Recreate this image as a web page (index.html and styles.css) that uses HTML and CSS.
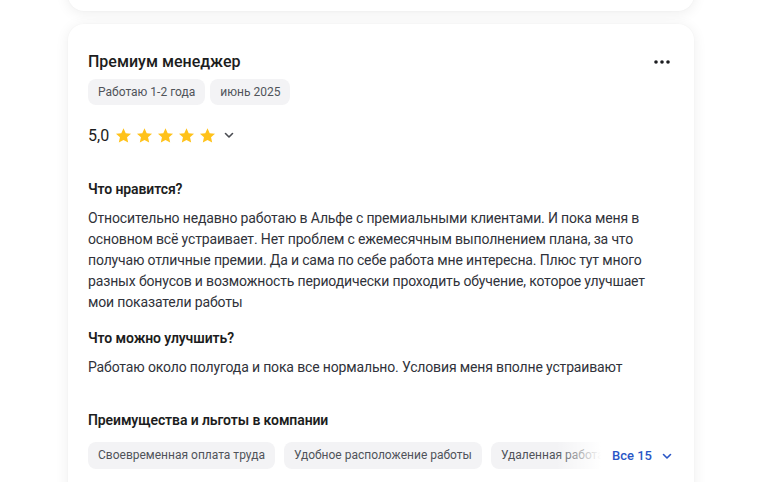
FILE: index.html
```html
<!DOCTYPE html>
<html lang="ru">
<head>
<meta charset="utf-8">
<link rel="stylesheet" href="styles.css">
</head>
<body>
<div class="page">
  <div class="card card-prev"></div>
  <div class="card review">
    <div class="head">
      <h2 class="title">Премиум менеджер</h2>
      <button class="more" aria-label="Ещё">
        <svg width="16" height="4" viewBox="0 0 16 4"><circle cx="2" cy="2" r="1.8"/><circle cx="8" cy="2" r="1.8"/><circle cx="14" cy="2" r="1.8"/></svg>
      </button>
    </div>
    <div class="tags">
      <span class="tag">Работаю 1-2 года</span>
      <span class="tag">июнь 2025</span>
    </div>
    <div class="rating">
      <span class="score">5,0</span>
      <span class="stars">
        <svg class="star" viewBox="0 0 24 24"><path d="M12 1.8l3.1 6.9 7.5.8-5.6 5.1 1.6 7.4L12 18.2 5.4 22l1.6-7.4-5.6-5.1 7.5-.8z"/></svg>
        <svg class="star" viewBox="0 0 24 24"><path d="M12 1.8l3.1 6.9 7.5.8-5.6 5.1 1.6 7.4L12 18.2 5.4 22l1.6-7.4-5.6-5.1 7.5-.8z"/></svg>
        <svg class="star" viewBox="0 0 24 24"><path d="M12 1.8l3.1 6.9 7.5.8-5.6 5.1 1.6 7.4L12 18.2 5.4 22l1.6-7.4-5.6-5.1 7.5-.8z"/></svg>
        <svg class="star" viewBox="0 0 24 24"><path d="M12 1.8l3.1 6.9 7.5.8-5.6 5.1 1.6 7.4L12 18.2 5.4 22l1.6-7.4-5.6-5.1 7.5-.8z"/></svg>
        <svg class="star" viewBox="0 0 24 24"><path d="M12 1.8l3.1 6.9 7.5.8-5.6 5.1 1.6 7.4L12 18.2 5.4 22l1.6-7.4-5.6-5.1 7.5-.8z"/></svg>
      </span>
      <svg class="chev chev-gray" width="12" height="12" viewBox="0 0 12 12"><path d="M2.5 4.5L6 8l3.5-3.5"/></svg>
    </div>

    <h3 class="section-title first">Что нравится?</h3>
    <p class="text">Относительно недавно работаю в Альфе с премиальными клиентами. И пока меня в основном всё устраивает. Нет проблем с ежемесячным выполнением плана, за что получаю отличные премии. Да и сама по себе работа мне интересна. Плюс тут много разных бонусов и возможность периодически проходить обучение, которое улучшает мои показатели работы</p>

    <h3 class="section-title">Что можно улучшить?</h3>
    <p class="text">Работаю около полугода и пока все нормально. Условия меня вполне устраивают</p>

    <h3 class="section-title benefits-title">Преимущества и льготы в компании</h3>
    <div class="benefits">
      <div class="chips">
        <span class="chip">Своевременная оплата труда</span>
        <span class="chip">Удобное расположение работы</span>
        <span class="chip">Удаленная работа</span>
        <span class="chip">Обучение</span>
      </div>
      <button class="all">Все 15
        <svg class="chev chev-blue" width="12" height="12" viewBox="0 0 12 12"><path d="M2.5 4.5L6 8l3.5-3.5"/></svg>
      </button>
    </div>
  </div>
</div>
</body>
</html>
```
FILE: styles.css
```css
* { box-sizing: border-box; }
html, body { margin: 0; padding: 0; background: #ffffff; }
body {
  font-family: Roboto, "Noto Sans", Arial, sans-serif;
  color: #1f2024;
  height: 482px;
  overflow: hidden;
}
.page {
  width: 626px;
  margin-left: 68px;
  display: flex;
  flex-direction: column;
  gap: 13px;
}
.card {
  background: #fff;
  border-radius: 16px;
  box-shadow: 0 2px 14px rgba(0, 0, 0, 0.075), 0 0 2px rgba(0,0,0,0.03);
}
.card-prev {
  height: 60px;
  margin-top: -49px;
}
.review {
  padding: 26px 20px 40px 20px;
}
.head {
  display: flex;
  align-items: center;
  justify-content: space-between;
  height: 24px;
}
.title {
  margin: 0;
  font-size: 16px;
  font-weight: 500;
  line-height: 24px;
  color: #1c1d20;
}
.more {
  border: 0;
  background: none;
  padding: 0;
  margin-right: 4px;
  display: flex;
  fill: #1c1d20;
}
.tags {
  display: flex;
  gap: 5px;
  margin-top: 5px;
}
.tag {
  background: #f3f3f5;
  border-radius: 8px;
  padding: 0 10px;
  height: 26px;
  line-height: 26px;
  font-size: 12px;
  color: #50535a;
}
.rating {
  display: flex;
  align-items: center;
  margin-top: 17px;
  height: 26px;
}
.score {
  font-size: 16px;
  font-weight: 400;
  color: #1c1d20;
  margin-right: 6px;
}
.stars {
  display: flex;
  gap: 4px;
}
.star {
  width: 17px;
  height: 17px;
  fill: #ffc21a;
}
.chev {
  fill: none;
  stroke-width: 1.6;
  stroke-linecap: round;
  stroke-linejoin: round;
}
.chev-gray {
  stroke: #4a4c52;
  margin-left: 7px;
}
.chev-blue {
  stroke: #2a56c6;
  margin-left: 9px;
}
.section-title {
  margin: 0;
  font-size: 14px;
  font-weight: 600;
  line-height: 20px;
  color: #1c1d20;
  letter-spacing: -0.1px;
}
.section-title.first { margin-top: 31px; }
.text {
  margin: 9px 0 15px;
  font-size: 14px;
  line-height: 21px;
  color: #30323a;
  letter-spacing: -0.15px;
}
.benefits-title { margin-top: 32px; }
.benefits {
  display: flex;
  align-items: center;
  margin-top: 12px;
}
.chips {
  display: flex;
  gap: 9px;
  width: 518px;
  overflow: hidden;
  position: relative;
  flex-shrink: 0;
}
.chips::after {
  content: "";
  position: absolute;
  right: 0;
  top: 0;
  bottom: 0;
  width: 50px;
  background: linear-gradient(to right, rgba(255,255,255,0), #fff 90%);
}
.chip {
  flex-shrink: 0;
  background: #f3f3f5;
  border-radius: 8px;
  padding: 0 10px;
  height: 27px;
  line-height: 27px;
  font-size: 12px;
  color: #50535a;
  white-space: nowrap;
}
.all {
  border: 0;
  background: none;
  padding: 0;
  margin-left: 6px;
  display: flex;
  align-items: center;
  white-space: nowrap;
  font-family: inherit;
  font-size: 13px;
  font-weight: 500;
  color: #2a56c6;
}
```
